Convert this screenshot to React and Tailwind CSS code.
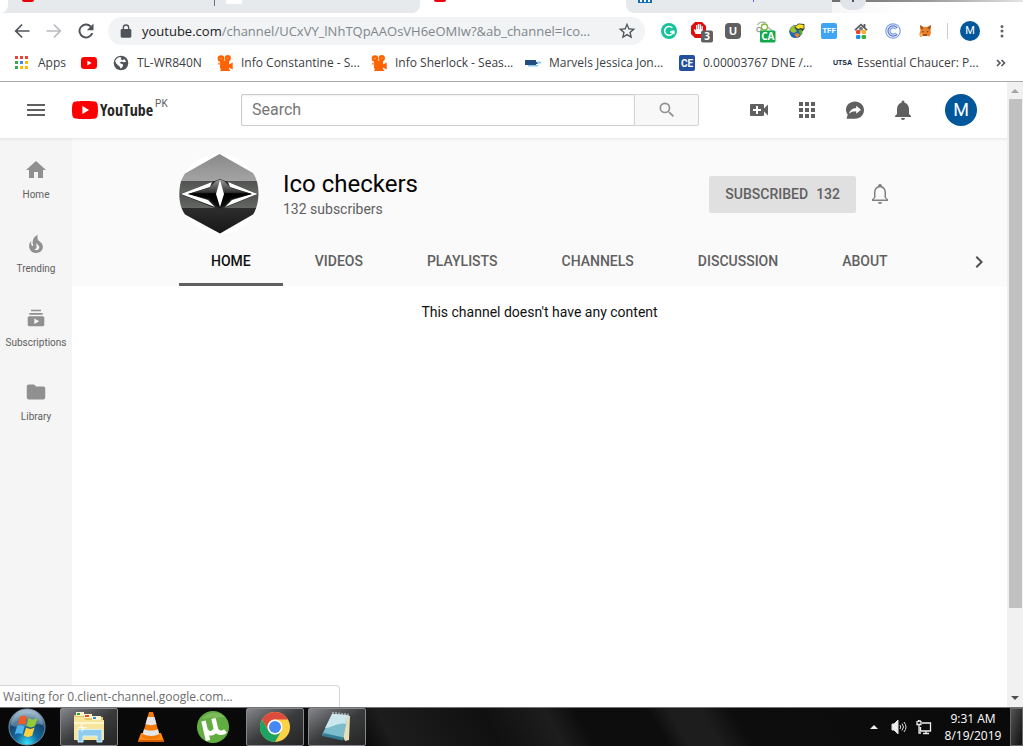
import React from "react";

const UI = "font-['Open_Sans','Noto_Sans',sans-serif]";

function Glyph({ d, className = "size-6", children, box = "0 0 24 24" }) {
  return (
    <svg viewBox={box} className={className} fill="currentColor" aria-hidden="true">
      {d && <path d={d} />}
      {children}
    </svg>
  );
}

function PlayBadge({ className = "h-4 w-4" }) {
  return (
    <svg viewBox="0 0 16 16" className={className} aria-hidden="true">
      <rect y="2" width="16" height="12" rx="3.2" fill="#f00" />
      <path d="M6.3 5.5v5L10.6 8z" fill="#fff" />
    </svg>
  );
}

function Camera() {
  return (
    <svg viewBox="0 0 16 16" className="size-4" fill="#ff6200" aria-hidden="true">
      <circle cx="4" cy="3.6" r="3.3" />
      <circle cx="10.8" cy="3.2" r="3.1" />
      <path d="M3 5.5h9v4l3.7-2v7L12 12.6V14l1.5 2H3.2L4 13.5H3z" />
      <path d="M2.6 3.6h2.6M9.6 3.2H12M1 8h2v1.6H1z" stroke="#ffc08f" strokeWidth=".7" />
    </svg>
  );
}

function AppsGrid() {
  const colors = ["#ea4335", "#ea4335", "#ea4335", "#34a853", "#4285f4", "#fbbc05", "#34a853", "#fbbc05", "#fbbc05"];
  return (
    <svg viewBox="0 0 16 16" className="size-4" aria-hidden="true">
      {colors.map((c, i) => (
        <rect key={i} x={1 + (i % 3) * 5} y={1 + Math.floor(i / 3) * 5} width="3" height="3" fill={c} />
      ))}
    </svg>
  );
}

function Globe() {
  return (
    <svg viewBox="0 0 16 16" className="size-4" aria-hidden="true">
      <circle cx="8" cy="8" r="7.3" fill="#50545a" />
      <path d="M2.2 6.3C2.6 4.2 4.8 2.4 7 2.1L8.600 3 7.500 4.200 9.600 5.200 11.300 4l1.900 2.800-2.600.400L8.400 6.600 6.500 8 9.800 9.200l.300 1.900-2.300 2.700-1.200-2.400L3.400 8.800z" fill="#fff" />
    </svg>
  );
}

function TabStrip() {
  return (
    <div className="flex h-[13px] overflow-hidden bg-white" aria-hidden="true">
      <div className="flex w-[420px] items-start rounded-br-lg bg-[#e7eaed]">
        <div className="h-[13px] w-2 rounded-br-lg bg-white" />
        <div className="ml-3.5 h-0.5 w-3 rounded-b bg-red-600" />
        <div className="ml-[180px] h-1.5 w-px bg-gray-500" />
        <div className="ml-[11px] h-1 w-4 bg-white" />
      </div>
      <div className="flex w-[206px] items-start">
        <div className="ml-3.5 h-0.5 w-3 rounded-b bg-red-600" />
      </div>
      <div className="flex w-[206px] items-start rounded-bl-lg bg-[#e7eaed]">
        <div className="ml-3 flex h-[3px] w-3.5 justify-center gap-0.5 bg-[#0b6fb0]">
          <span className="h-0.5 w-0.5 bg-white" />
          <span className="h-0.5 w-0.5 bg-white" />
          <span className="h-0.5 w-0.5 bg-white" />
        </div>
        <div className="ml-[101px] h-0.5 w-px bg-indigo-500" />
      </div>
      <div className="flex flex-1 flex-col bg-linear-to-r from-[#f6f6f6] to-white to-40%">
        <div className="flex h-0.5 bg-linear-to-r from-[#6f6f6f] via-[#999] to-[#e4e4e4]">
          <div className="ml-2 flex h-2.5 w-[26px] justify-center rounded-b-full bg-[#e1e5e9]">
            <div className="h-0.5 w-0.5 bg-gray-600" />
          </div>
        </div>
      </div>
    </div>
  );
}

function Extensions() {
  return (
    <div className="ml-2 flex shrink-0 items-center">
      <button aria-label="Grammar check" className="grid w-8 place-items-center">
        <svg viewBox="0 0 16 16" className="size-4">
          <circle cx="8" cy="8" r="8" fill="#15c39a" />
          <path d="M11.3 4.9A4.4 4.4 0 1 0 12.3 9H9" fill="none" stroke="#fff" strokeWidth="1.6" />
          <path d="M10.4 8.2h2.6v3" fill="none" stroke="#fff" strokeWidth="1.2" />
        </svg>
      </button>
      <button aria-label="Ad blocker" className="grid w-8 place-items-center">
        <svg viewBox="-2 0 24 24" className="size-6">
          <path d="M4 3h7l4 4v8l-4 4H4l-4-4V7z" fill="#e40d0d" />
          <path d="M4.500 15 2.800 10.500l1-.4 1.300 1.500V6h1.300v4h.500V5h1.400v5h.500V5.400h1.300V10h.500V7h1.200v8z" fill="#fff" />
          <rect x="10" y="11.500" width="12" height="12" rx="2" fill="#606060" />
          <text x="16" y="21.300" textAnchor="middle" fontSize="10" fontWeight="700" fill="#fff" fontFamily="Open Sans">3</text>
        </svg>
      </button>
      <button className="grid w-8 place-items-center">
        <span className="grid size-4 place-items-center rounded-sm bg-[#606060] font-['Liberation_Sans',sans-serif] text-[11px] font-bold text-white">U</span>
      </button>
      <button aria-label="CA" className="grid w-8 place-items-center">
        <svg viewBox="-3 0 24 24" className="size-6">
          <g fill="none" strokeWidth="1.300">
            <circle cx="3" cy="10.500" r="2.200" stroke="#a0a5a0" />
            <circle cx="8.500" cy="8" r="3" stroke="#7bb92f" />
            <path d="M1.500 6c2-3.500 6-3.500 8.500-2M11.500 8l5 4" stroke="#a8b5a0" />
          </g>
          <rect x="4" y="11.500" width="15.500" height="12" rx="1.500" fill="#12a84c" />
          <text x="11.800" y="21.300" textAnchor="middle" fontSize="10" fontWeight="700" fill="#fff" fontFamily="Open Sans">CA</text>
        </svg>
      </button>
      <button aria-label="Download manager" className="grid w-8 place-items-center">
        <svg viewBox="0 0 16 16" className="size-4">
          <circle cx="6.7" cy="8.6" r="6.5" fill="#2465b5" />
          <path d="M1 6c2-4 6-4 7-3L6 6l2 2-3 2-3-1z" fill="#9bc52b" />
          <path d="M5 11l4-1 2 2-3 3z" fill="#e0862c" />
          <path d="m5 4 4.500-3.500 5.800.5.2 5-3 3.300-1-3.200L9 7.300z" fill="#353c24" />
          <path d="m6 3.800 4-2.500 4.500.6v3.800L11.800 5 9.200 6z" fill="#ffe32b" />
          <path d="m9.500 7 3.200-.6.8 4-2 2z" fill="#57a82b" />
        </svg>
      </button>
      <button className="grid w-8 place-items-center">
        <span className="grid size-4 place-items-center rounded-xs bg-[#40a4f4] font-['Roboto',sans-serif] text-[8px] font-bold text-white">TFF</span>
      </button>
      <button aria-label="Home tools" className="grid w-8 place-items-center">
        <svg viewBox="0 0 16 16" className="size-4">
          <path d="M2 7.2 8 1.7l6 5.500M11.500 1v4" fill="none" stroke="#5b5b5b" strokeWidth="1.800" />
          <rect x="6.2" y="4" width="3.600" height="3.600" rx="1" fill="#777" />
          <rect x="3" y="7" width="4.400" height="4" rx="1.300" fill="#e6422c" />
          <rect x="8.600" y="7" width="4.400" height="4" rx="1.300" fill="#f5af24" />
          <rect x="3" y="12" width="4.400" height="4" rx="1.300" fill="#178fe5" />
          <rect x="8.600" y="12" width="4.400" height="4" rx="1.300" fill="#38ae35" />
        </svg>
      </button>
      <button aria-label="Coin tracker" className="grid w-8 place-items-center">
        <svg viewBox="0 0 16 16" className="size-4" fill="none">
          <circle cx="8" cy="8" r="7.200" stroke="#7ca4e0" strokeWidth="1.200" />
          <path d="M12.200 5A5.100 5.100 0 1 0 12.200 11" stroke="#5f72d2" strokeWidth="1.300" />
          <path d="M10.600 6.200A3.100 3.100 0 1 0 10.600 9.800" stroke="#6f9edc" strokeWidth="1.200" />
        </svg>
      </button>
      <button aria-label="Wallet" className="grid w-8 place-items-center">
        <svg viewBox="0 0 16 16" className="size-4">
          <path d="m3 2 4 2h3l4-2-.5 5 .5 3-1.500 3.500-3-.7H6.500l-3.500 1.200L2.500 10.500l1-3z" fill="#ed8128" />
          <path d="m3 2 3.500 3L4 7zM14 2l-4 3 3 2zM6 11h4v2H6z" fill="#9e5223" />
          <path d="m5 8 2 .7-1 .7zM11.500 8l-2 .7 1 .7z" fill="#27313a" />
          <path d="m2.500 11 3-1v2.700L3 13.500z" fill="#f7ae61" />
        </svg>
      </button>
      <span className="ml-1.5 h-4 w-px bg-[#c9cbce]" />
      <button className="ml-3 grid size-5 place-items-center rounded-full bg-[#01579b] font-['Roboto',sans-serif] text-[11px] text-white">M</button>
      <button aria-label="Menu" className="ml-2.5 grid w-6 place-items-center text-[#5f6368]">
        <Glyph className="size-[18px]" d="M12 8a2 2 0 1 0 0-4 2 2 0 0 0 0 4zm0 2a2 2 0 1 0 0 4 2 2 0 0 0 0-4zm0 6.500a2 2 0 1 0 0 4 2 2 0 0 0 0-4z" />
      </button>
    </div>
  );
}

function Toolbar() {
  return (
    <div className="flex h-9 items-center pl-1.5 pr-[9px] text-[#50545a]">
      <button aria-label="Back" className="grid w-8 place-items-center">
        <Glyph className="size-5" d="M21 11H6.800l6.100-6.100L11.500 3.500 3 12l8.500 8.500 1.400-1.400L6.800 13H21z" />
      </button>
      <button aria-label="Forward" className="grid w-8 place-items-center text-[#b9bbbe]">
        <Glyph className="size-5" d="M3 11h14.200l-6.100-6.100 1.400-1.400L21 12l-8.500 8.500-1.400-1.400 6.100-6.100H3z" />
      </button>
      <button aria-label="Reload" className="grid w-8 place-items-center">
        <Glyph className="size-5" d="M18.400 5.600A9 9 0 1 0 20.700 14.500h-2.400a6.700 6.700 0 1 1-1.500-7.300L13 11h8V3z" />
      </button>
      <div className="ml-1.5 flex h-7 min-w-0 flex-1 items-center rounded-full bg-[#f1f3f4] pr-2">
        <Glyph className="ml-2.5 mr-2 size-4 shrink-0" d="M18 9h-1V7A5 5 0 0 0 7 7v2H6a2 2 0 0 0-2 2v9a2 2 0 0 0 2 2h12a2 2 0 0 0 2-2v-9a2 2 0 0 0-2-2zM9 7a3 3 0 0 1 6 0v2H9z" />
        <p className={`min-w-0 flex-1 whitespace-nowrap text-[13px] leading-5 text-[#80868b] ${UI}`}>
          <span className="text-[#202124]">youtube.com</span>/channel/UCxVY_lNhTQpAAOsVH6eOMIw?&amp;ab_channel=Ico...
        </p>
        <button aria-label="Bookmark this page">
          <Glyph className="size-5" d="m22 9.240-7.190-.620L12 2 9.190 8.630 2 9.240l5.460 4.730L5.820 21 12 17.270 18.180 21l-1.630-7.030zM12 15.400l-3.760 2.270 1-4.280-3.320-2.880 4.380-.380L12 6.100l1.710 4.040 4.380.380-3.320 2.880 1 4.280z" />
        </button>
      </div>
      <Extensions />
    </div>
  );
}

const marks = [
  { w: "w-[51px]", label: "Apps", icon: <AppsGrid /> },
  { w: "w-4", label: "", icon: <PlayBadge /> },
  { w: "w-[88px]", label: "TL-WR840N", icon: <Globe /> },
  { w: "w-[138px]", label: "Info Constantine - S...", icon: <Camera /> },
  { w: "w-[138px]", label: "Info Sherlock - Seas...", icon: <Camera /> },
  {
    w: "w-[138px]",
    label: "Marvels Jessica Jon...",
    icon: (
      <svg viewBox="0 0 16 16" className="size-4" aria-hidden="true">
        <path d="M0 5h11v2h2v2h-2v1H0z" fill="#244c7d" />
        <path d="M3 10h10v1.500H3zM12 6.500h4v2h-4z" fill="#86c9ea" />
      </svg>
    ),
  },
  {
    w: "w-[138px]",
    label: "0.00003767 DNE /...",
    icon: <span className="grid size-4 place-items-center rounded-xs bg-[#234f9f] font-['Roboto',sans-serif] text-[10px] font-bold text-white">CE</span>,
  },
  {
    w: "w-[138px]",
    label: "Essential Chaucer: P...",
    icon: <span className="w-4 font-['Liberation_Sans',sans-serif] text-[7px] font-bold text-[#0c2340]">UTSA</span>,
  },
];

function Bookmarks() {
  return (
    <nav className={`flex h-[33px] items-center gap-4 overflow-hidden border-b border-[#a9abad] pb-1 pl-3.5 pr-4 text-[12px] text-[#3c4043] ${UI}`}>
      {marks.map((m) => (
        <a key={m.label} href="#" aria-label={m.label || "YouTube"} className={`flex shrink-0 items-center gap-2 whitespace-nowrap ${m.w}`}>
          <span className="flex size-4 shrink-0 items-center">{m.icon}</span>
          {m.label && <span>{m.label}</span>}
        </a>
      ))}
      <button aria-label="More bookmarks" className="ml-auto">
        <svg viewBox="0 0 12 10" className="h-2.5 w-3" fill="none" stroke="#50545a" strokeWidth="1.6">
          <path d="m2 2 3 3-3 3M6.500 2l3 3-3 3" />
        </svg>
      </button>
    </nav>
  );
}

function Masthead() {
  return (
    <header className="flex h-14 shrink-0 items-center bg-white">
      <div className="flex w-[241px] shrink-0 items-center">
        <button aria-label="Guide" className="ml-6 text-[#606060]">
          <Glyph d="M3 18h18v-2H3zm0-5h18v-2H3zm0-7v2h18V6z" />
        </button>
        <a href="#" aria-label="YouTube home" className="ml-6 flex items-center">
          <svg viewBox="0 0 26 18" className="h-[18px] w-[26px]">
            <path d="M25.400 2.800A3.200 3.200 0 0 0 23.100.600C21 0 13 0 13 0S5 0 2.900.600A3.200 3.200 0 0 0 .600 2.800C0 4.800 0 9 0 9s0 4.200.600 6.200a3.200 3.200 0 0 0 2.300 2.200C5 18 13 18 13 18s8 0 10.100-.600a3.200 3.200 0 0 0 2.300-2.200C26 13.200 26 9 26 9s0-4.200-.600-6.200z" fill="#f00" />
            <path d="M10.400 12.900V5.100L17.100 9z" fill="#fff" />
          </svg>
          <span className="ml-0.5 font-['Open_Sans_Condensed','Liberation_Sans_Narrow',sans-serif] text-[16px] leading-6 font-bold text-[#282828]">YouTube</span>
          <span className="mb-3 ml-0.5 font-['Roboto',sans-serif] text-[10px] leading-3 text-[#606060]">PK</span>
        </a>
      </div>
      <form className="flex h-8 max-w-[640px] flex-1" onSubmit={(e) => e.preventDefault()}>
        <input
          aria-label="Search"
          placeholder="Search"
          className="min-w-0 flex-1 rounded-l-xs border border-r-0 border-[#ccc] px-2.5 text-base text-[#111] shadow-[inset_0_1px_2px_#eee] outline-none placeholder:text-[#757575]"
        />
        <button aria-label="Search" className="grid w-[65px] place-items-center rounded-r-xs border border-[#d3d3d3] bg-[#f8f8f8] text-[#909090]">
          <Glyph className="size-5" d="M15.500 14h-.790l-.280-.270A6.470 6.470 0 0 0 16 9.500 6.500 6.500 0 1 0 9.500 16c1.610 0 3.090-.590 4.230-1.570l.270.280v.790l5 4.990L20.490 19zm-6 0a4.500 4.500 0 1 1 0-9 4.500 4.500 0 0 1 0 9z" />
        </button>
      </form>
      <div className="ml-12 mr-[30px] flex shrink-0 items-center gap-6 text-[#606060]">
        <button aria-label="Create">
          <Glyph d="M17 10.500V7a1 1 0 0 0-1-1H4a1 1 0 0 0-1 1v10a1 1 0 0 0 1 1h12a1 1 0 0 0 1-1v-3.500l4 4v-11zM14 13h-3v3H9v-3H6v-2h3V8h2v3h3z" />
        </button>
        <button aria-label="Apps">
          <Glyph d="M4 8h4V4H4zm6 12h4v-4h-4zm-6 0h4v-4H4zm0-6h4v-4H4zm6 0h4v-4h-4zm6-10v4h4V4zm-6 4h4V4h-4zm6 6h4v-4h-4zm0 6h4v-4h-4z" />
        </button>
        <button aria-label="Messages">
          <Glyph>
            <path d="M12 3.500c-5 0-9 3.600-9 8.200 0 1.800.600 3.500 1.700 4.900L3.500 20.700h8.800c4.900 0 8.700-3.900 8.700-8.700s-4-8.500-9-8.500z" />
            <path d="m13.200 7.700 4.800 4-4.800 4v-2.500c-3.300 0-5.400.700-7.200 2.600.800-3.300 3-5.400 7.200-5.800z" fill="#fff" />
          </Glyph>
        </button>
        <button aria-label="Notifications">
          <Glyph d="M12 22a2 2 0 0 0 2-2h-4a2 2 0 0 0 2 2zm6-6v-5c0-3.070-1.640-5.640-4.500-6.320V4a1.500 1.500 0 0 0-3 0v.680C7.630 5.360 6 7.920 6 11v5l-2 2v1h16v-1z" />
        </button>
        <button className="ml-1.5 grid size-8 place-items-center rounded-full bg-[#01579b] text-[18px] leading-5 text-white">M</button>
      </div>
    </header>
  );
}

const guide = [
  ["Home", <path key="p" d="M10 20v-6h4v6h5v-8h3L12 3 2 12h3v8z" />],
  ["Trending", <path key="p" d="M17.530 11.200c-.230-.300-.500-.560-.760-.820-.650-.600-1.400-1.030-2.030-1.660C13.300 7.260 13 4.850 13.900 3c-.900.230-1.750.750-2.450 1.320-2.540 2.080-3.540 5.750-2.340 8.900.040.100.080.200.080.330 0 .220-.150.420-.350.500-.220.100-.460.040-.640-.120a.83.83 0 0 1-.150-.170c-1.100-1.430-1.280-3.480-.530-5.120C5.890 10 5 12.300 5.140 14.470c.040.500.100 1 .270 1.500.140.600.400 1.200.720 1.730 1.040 1.730 2.870 2.970 4.840 3.220 2.100.270 4.350-.120 5.960-1.600 1.800-1.660 2.450-4.320 1.500-6.600l-.130-.260c-.200-.460-.470-.870-.800-1.250zm-3.100 6.300c-.280.240-.730.500-1.080.600-1.100.400-2.200-.160-2.870-.820 1.190-.280 1.890-1.160 2.090-2.050.170-.800-.140-1.460-.270-2.230-.120-.740-.100-1.370.180-2.060.170.380.370.760.600 1.060.760 1 1.950 1.440 2.200 2.800.040.140.060.280.060.430.030.820-.320 1.720-.920 2.270z" />],
  ["Subscriptions", <path key="p" d="M18.700 8.700H5.300V7h13.400zm-1.700-5H7v1.600h10zm3.300 8.300v6.600c0 1-.700 1.600-1.600 1.600H5.300c-.900 0-1.600-.700-1.600-1.600V12c0-1 .700-1.700 1.600-1.700h13.400c1 0 1.600.800 1.600 1.700zm-5 3.300-5-2.700V18z" />],
  ["Library", <path key="p" d="M10 4H4c-1.100 0-2 .900-2 2v12c0 1.100.900 2 2 2h16c1.100 0 2-.900 2-2V8c0-1.100-.900-2-2-2h-8z" />],
];

function Guide() {
  return (
    <nav className="w-[72px] shrink-0 bg-[#f5f5f5] pt-1 shadow-[inset_0_4px_3px_-3px_#e0e0e0]">
      {guide.map(([label, shape]) => (
        <a key={label} href="#" className="flex h-[74px] flex-col items-center pt-4 text-[10px] leading-[14px] text-[#606060]">
          <Glyph
            className="mb-1.5 size-6 text-[#909090]"
            box={label === "Library" ? "-1 -1 26 26" : "0 0 24 24"}
          >
            {shape}
          </Glyph>
          {label}
        </a>
      ))}
    </nav>
  );
}

function ChannelAvatar() {
  return (
    <svg viewBox="0 0 80 80" className="size-20 shrink-0" role="img" aria-label="Ico checkers">
      <defs>
        <linearGradient id="top" x1="0" x2="0" y1="0" y2="1">
          <stop offset="0" stopColor="#888a88" /><stop offset="1" stopColor="#a3a3a3" />
        </linearGradient>
        <linearGradient id="mid" x1="0" x2="0" y1="0" y2="1">
          <stop offset="0" stopColor="#505250" /><stop offset="1" stopColor="#646764" />
        </linearGradient>
        <linearGradient id="low" x1="0" x2="0" y1="0" y2="1">
          <stop offset="0" stopColor="#2c2d2c" /><stop offset="1" stopColor="#161616" />
        </linearGradient>
        <linearGradient id="star" x1="0" x2="0" y1="0" y2="1">
          <stop offset="0" stopColor="#999" /><stop offset=".45" stopColor="#333" /><stop offset=".5" stopColor="#000" /><stop offset="1" stopColor="#111" />
        </linearGradient>
        <clipPath id="hex"><path d="M40.500 0 74 19c3.500 5 5.500 12 5.500 20.500S77.500 55 74 60.500L41 79.500 6 60.500C2 55 .3 48 .3 40S2 25 6 19.500z" /></clipPath>
      </defs>
      <circle cx="40" cy="40" r="40" fill="#fff" />
      <g clipPath="url(#hex)">
        <path fill="url(#top)" d="M0 0h80v27H0z" />
        <path fill="url(#mid)" d="M0 27h80v13H0z" />
        <path fill="url(#mid)" d="M0 40h80v14H0z" />
        <path fill="url(#low)" d="M0 54h80v26H0z" />
      </g>
      <path d="M1 40 33 28l8-3 8 3 30 12-31 13-8 2-7-2z" fill="#272927" />
      <path d="M2 40 33 28l-2 5-22 7 20 6 7 7zM78.500 40 49 28l2 5 22 7-20 6-7 7z" fill="#fff" />
      <path d="m9 40 21-6 7-7 4-1.500 4 1.500 7 7 21 6-21 5-7 7-4 2-4-2-7-7z" fill="url(#star)" />
      <path d="m41 26 4 14-4 13-4-13z" fill="#fff" />
    </svg>
  );
}

function Channel() {
  const tabs = ["HOME", "VIDEOS", "PLAYLISTS", "CHANNELS", "DISCUSSION", "ABOUT"];
  return (
    <main className="min-w-0 flex-1 bg-white">
      <section className="bg-[#fafafa] shadow-[inset_0_4px_3px_-3px_#e6e6e6]">
        <div className="flex h-[100px] items-center pl-[107px] pr-[115px] pt-3">
          <ChannelAvatar />
          <div className="ml-6 flex-1">
            <h1 className="text-2xl leading-[30px] text-[#030303]">Ico checkers</h1>
            <p className="text-sm leading-5 text-[#606060]">132 subscribers</p>
          </div>
          <button className="h-[37px] rounded-xs bg-[#e0e0e0] px-4 text-sm font-medium text-[#606060]">
            SUBSCRIBED<span className="ml-2">132</span>
          </button>
          <button aria-label="Notification settings" className="ml-3 text-[#808080]">
            <Glyph d="M10 20h4a2 2 0 0 1-4 0zm10-2.650V19H4v-1.650l2-1.880v-5.150C6 7.400 7.560 5.100 10 4.340v-.380a2 2 0 0 1 4 0v.380c2.440.760 4 3.060 4 5.980v5.150zm-1.500.150-2-1.880v-5.200c0-2.300-1.100-4-2.900-4.650-1.100-.450-2.300-.450-3.300 0C8.500 6.420 7.500 8.100 7.500 10.420v5.200l-2 1.880z" />
          </button>
        </div>
        <div className="flex h-12 items-center pl-[107px] pr-4">
          <div role="tablist" className="flex h-full">
            {tabs.map((t, i) => (
              <button
                key={t}
                role="tab"
                aria-selected={i === 0}
                className={
                  i === 0
                    ? "border-b-3 border-[#606060] px-8 text-sm font-medium text-[#111]"
                    : "border-b-3 border-transparent px-8 text-sm font-medium text-[#606060]"
                }
              >
                {t}
              </button>
            ))}
          </div>
          <button aria-label="Next tabs" className="ml-auto text-[#505050]">
            <Glyph d="M10 6 8.590 7.410 13.170 12l-4.580 4.590L10 18l6-6z" />
          </button>
        </div>
      </section>
      <p className="pt-4 text-center text-sm leading-5 text-[#111]">This channel doesn't have any content</p>
    </main>
  );
}

function Scrollbar() {
  return (
    <div className="flex w-4 shrink-0 flex-col items-center bg-[#f1f1f1]" aria-hidden="true">
      <svg viewBox="0 0 16 17" className="h-[17px] w-4"><path d="m4 11 4-4 4 4z" fill="#a3a3a3" /></svg>
      <div className="w-[13px] flex-[510] bg-[#c1c1c1]" />
      <div className="flex-[82]" />
      <svg viewBox="0 0 16 17" className="h-[17px] w-4"><path d="m4 6 4 4 4-4z" fill="#505050" /></svg>
    </div>
  );
}

function StartOrb() {
  return (
    <svg viewBox="0 0 40 40" className="size-[38px]">
      <defs>
        <radialGradient id="orb" cx=".5" cy=".95" r=".9">
          <stop offset="0" stopColor="#35e3fb" /><stop offset=".35" stopColor="#146c9f" /><stop offset=".7" stopColor="#15466e" /><stop offset="1" stopColor="#a2bac9" />
        </radialGradient>
      </defs>
      <circle cx="20" cy="20" r="19" fill="url(#orb)" stroke="#7594a9" />
      <path d="M3 18C5-1 35-1 37 18 29 14 15 24 3 18z" fill="#c7dce8" opacity=".35" />
      <path d="M12.500 9.500c3-2 5.500-1.500 7.500 0l-2 8.500c-3-2-5.500-2-8 0z" fill="#ef5b27" />
      <path d="M21.500 10.500c3 2 6 2 9.500 0l-2.500 8.500c-3 2-6 2-9 0z" fill="#92c936" />
      <path d="M9.500 19.500c3-2 5.500-1.500 8 0l-2.500 8.500c-2.500-2-5.500-2-8 0z" fill="#4eb4ee" />
      <path d="M19 20.500c3 2 6 2 9 0l-2.500 8.500c-3 2-6 2-9 0z" fill="#ffd03d" />
    </svg>
  );
}

function ExplorerIcon() {
  return (
    <svg viewBox="0 0 32 32" className="size-8">
      <path d="M1 4h9l1 2h19v22H1z" fill="#e8c765" />
      <path d="M3 1h8v4H3zM11 3h8v4h-8zM19 5h9v4h-9z" fill="#fff4ce" />
      <path fill="#27a942" d="M4 2h3v2H4z" /><path fill="#e64d24" d="M12 4h4v2h-4z" /><path fill="#2b94df" d="M20 6h3v2h-3z" />
      <path d="M1 6h10l1 3h19v20H1z" fill="#f7e59b" />
      <path d="M1 11h30v2H1zM3 18h26v1H3z" fill="#fff7cc" />
      <path d="M5 31V20c0-1 1-1.500 2-1.500h20c1 0 2 .5 2 1.500v11h-5v-6H10v6z" fill="#8ecbed" stroke="#d4f1ff" />
      <path d="M9 12v9M5 16.500h9M7 14l5 5" stroke="#fff" strokeWidth=".8" />
    </svg>
  );
}

function ConeIcon() {
  return (
    <svg viewBox="0 0 28 32" className="h-8 w-7">
      <path d="M4 22h20l3 8H1z" fill="#ff8a14" /><path d="m1 29 26 0v2H1z" fill="#d65b04" />
      <path d="M12 1h4l7 25c-4 3-14 3-18 0z" fill="#f37908" />
      <path d="m10.500 6 7 0 2 7c-3 1.500-8 1.500-11 0zM7 18c4 2 10 2 14 0l1.300 5c-5 2.500-11 2.500-16.600 0z" fill="#e4e6e8" />
    </svg>
  );
}

function MuIcon() {
  return (
    <svg viewBox="0 0 32 32" className="size-8">
      <circle cx="16" cy="16" r="16" fill="#62ad40" />
      <path d="M5 8c6-8 17-8 23-2-7 1-14 0-23 2z" fill="#93ca75" opacity=".5" />
      <path d="m6.500 10 4.500 19.500M9 19c2 5 8 4 9.500-.500M16.500 7.500l2.500 10.500c1 4 6 5 9.500 2" fill="none" stroke="#fff" strokeWidth="4.500" />
    </svg>
  );
}

function ChromeIcon() {
  return (
    <svg viewBox="0 0 32 32" className="size-8">
      <circle cx="16" cy="16" r="15" fill="#fdd247" />
      <path d="M3 8.500A15 15 0 0 1 29 8.500H16A7.500 7.500 0 0 0 9.500 19.800z" fill="#dc4b3e" />
      <path d="M3 8.500 9.500 19.700A7.500 7.500 0 0 0 22.500 19.700L16 31A15 15 0 0 1 3 8.500z" fill="#1da462" />
      <circle cx="16" cy="16" r="7.500" fill="#fff" /><circle cx="16" cy="16" r="6" fill="#4688f1" />
    </svg>
  );
}

function NotepadIcon() {
  return (
    <svg viewBox="0 0 32 32" className="size-8">
      <path d="m12 3 17 2-1 24-4 1z" fill="#e9dfb4" />
      <path d="m11 3 16 1-5 25-21-5z" fill="#7dbccd" />
      <path d="m11 3 16 1-2 9C17 11 11 17 4 17z" fill="#c9e8ee" />
      <path d="m1 25 21 4.500.700-3L2.500 22z" fill="#347d93" />
      <path d="M12 1v4M15 1v4M18 1.500v4M21 2v4M24 2v4M27 2.500v4" stroke="#e5e5e5" />
    </svg>
  );
}

const plain = "grid h-full w-[58px] place-items-center";
const open = "grid h-full w-[58px] place-items-center rounded-xs border border-[#85878a] bg-linear-to-br from-[#85868a] via-[#3a3b3c] to-[#252525]";

function Taskbar() {
  return (
    <footer className="flex h-[39px] shrink-0 items-stretch border-t border-[#737373] bg-[linear-gradient(60deg,#080808_0%,#0a0a0a_35%,#1d1d1d_38%,#101010_48%,#1d1d1d_54%,#0d0d0d_57%,#0d0d0d_64%,#1d1d1d_66%,#1d1d1d_69%,#0d0d0d_72%,#0a0a0a_100%)] text-white">
      <button aria-label="Start" className="grid w-[54px] place-items-center"><StartOrb /></button>
      <div className="ml-1.5 flex gap-1">
        <button aria-label="File Explorer" className={open}><ExplorerIcon /></button>
        <button aria-label="VLC" className={plain}><ConeIcon /></button>
        <button aria-label="uTorrent" className={plain}><MuIcon /></button>
        <button aria-label="Chrome" className={open}><ChromeIcon /></button>
        <button aria-label="Notepad" className={open}><NotepadIcon /></button>
      </div>
      <div className="ml-auto flex items-center">
        <button aria-label="Show hidden icons"><svg viewBox="0 0 8 4" className="h-1 w-2"><path d="m0 4 4-4 4 4z" fill="#eee" /></svg></button>
        <button aria-label="Volume" className="ml-3">
          <svg viewBox="0 0 18 16" className="h-4 w-[18px]" fill="none" stroke="#ddd">
            <path d="M2 5h2l4-4v14l-4-4H2z" fill="#eee" /><path d="M10 6q1.500 2 0 4M12 4.500q3 3.500 0 7M14 3q4 5 0 10" />
          </svg>
        </button>
        <button aria-label="Network" className="ml-2">
          <svg viewBox="0 0 16 16" className="size-4" fill="none" stroke="#eee" strokeWidth="1.300">
            <path d="M6 4h8.500v8H4.500V8M7 14.500h6M10 12v2.500M1 2v3.500h4V2M2.500 1v2M4 1v2M3 6v8h2" />
          </svg>
        </button>
        <div className={`ml-1 w-[74px] text-center text-[12px] leading-[17px] ${UI}`}>
          <p>9:31 AM</p>
          <p>8/19/2019</p>
        </div>
        <button aria-label="Show desktop" className="h-full w-[13px] border border-[#66686a] bg-linear-to-br from-[#555] to-[#111]" />
      </div>
    </footer>
  );
}

export default function App() {
  return (
    <div className="flex min-h-screen flex-col overflow-hidden bg-white font-['Roboto',sans-serif]">
      <TabStrip />
      <Toolbar />
      <Bookmarks />
      <div className="relative flex flex-1">
        <div className="flex min-w-0 flex-1 flex-col">
          <Masthead />
          <div className="flex flex-1">
            <Guide />
            <Channel />
          </div>
        </div>
        <Scrollbar />
        <div role="status" className={`absolute bottom-0 left-0 flex h-[22px] w-[340px] items-center rounded-tr border border-b-0 border-l-0 border-[#d6d6d6] bg-white pl-[3px] text-[12px] text-[#6d6d6d] ${UI}`}>
          Waiting for 0.client-channel.google.com...
        </div>
      </div>
      <Taskbar />
    </div>
  );
}
